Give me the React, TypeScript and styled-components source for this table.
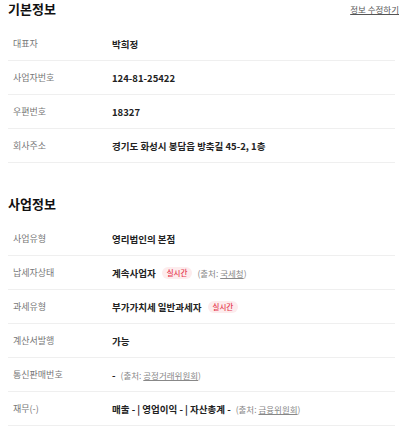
import React from "react";
import styled, { createGlobalStyle } from "styled-components";

const Global = createGlobalStyle`
  html, body { margin: 0; padding: 0; background: #fff; }
  body { font-family: "Noto Sans CJK KR", "Noto Sans", sans-serif; color: #222; }
`;

const Page = styled.div`
  width: 387px;
  padding-left: 8px;
`;

const Section = styled.section<{ $first?: boolean }>`
  margin-top: ${(p) => (p.$first ? "0" : "32px")};
`;

const Header = styled.div`
  display: flex;
  align-items: center;
  justify-content: space-between;
  height: 18px;
  margin-bottom: 9px;
`;

const Title = styled.h2`
  margin: 0;
  font-size: 13px;
  font-weight: 700;
  color: #111;
  line-height: 18px;
`;

const EditLink = styled.a`
  font-size: 8.5px;
  color: #555;
  text-decoration: underline;
  white-space: nowrap;
  margin-right: -4px;
`;

const Row = styled.div`
  display: flex;
  align-items: center;
  height: 33px;
  border-bottom: 1px solid #efefef;
  padding-left: 5px;
`;

const Label = styled.div`
  width: 99px;
  flex-shrink: 0;
  font-size: 9px;
  color: #777;
`;

const Value = styled.div`
  display: flex;
  align-items: center;
  gap: 5px;
  font-size: 9.5px;
  font-weight: 700;
  color: #222;
  white-space: nowrap;
`;

const Badge = styled.span`
  display: inline-flex;
  align-items: center;
  height: 12px;
  padding: 0 5px;
  border-radius: 6px;
  background: #fdeced;
  color: #e53950;
  font-size: 7.5px;
  font-weight: 500;
  margin-left: 1px;
`;

const Source = styled.span`
  font-size: 8.5px;
  font-weight: 400;
  color: #888;
`;

const SourceLink = styled.span`
  text-decoration: underline;
`;

type Item = { label: string; value: React.ReactNode };

const basic: Item[] = [
  { label: "대표자", value: "박희정" },
  { label: "사업자번호", value: "124-81-25422" },
  { label: "우편번호", value: "18327" },
  { label: "회사주소", value: "경기도 화성시 봉담읍 방축길 45-2, 1층" },
];

const biz: Item[] = [
  { label: "사업유형", value: "영리법인의 본점" },
  {
    label: "납세자상태",
    value: (
      <>
        계속사업자 <Badge>실시간</Badge>
        <Source>
          (출처: <SourceLink>국세청</SourceLink>)
        </Source>
      </>
    ),
  },
  {
    label: "과세유형",
    value: (
      <>
        부가가치세 일반과세자 <Badge>실시간</Badge>
      </>
    ),
  },
  { label: "계산서발행", value: "가능" },
  {
    label: "통신판매번호",
    value: (
      <>
        -
        <Source>
          (출처: <SourceLink>공정거래위원회</SourceLink>)
        </Source>
      </>
    ),
  },
  {
    label: "재무(-)",
    value: (
      <>
        매출 - | 영업이익 - | 자산총계 -
        <Source>
          (출처: <SourceLink>금융위원회</SourceLink>)
        </Source>
      </>
    ),
  },
];

export default function App() {
  return (
    <Page>
      <Global />
      <Section $first>
        <Header>
          <Title>기본정보</Title>
          <EditLink>정보 수정하기</EditLink>
        </Header>
        {basic.map((it) => (
          <Row key={it.label}>
            <Label>{it.label}</Label>
            <Value>{it.value}</Value>
          </Row>
        ))}
      </Section>
      <Section>
        <Header>
          <Title>사업정보</Title>
        </Header>
        {biz.map((it) => (
          <Row key={it.label}>
            <Label>{it.label}</Label>
            <Value>{it.value}</Value>
          </Row>
        ))}
      </Section>
    </Page>
  );
}
